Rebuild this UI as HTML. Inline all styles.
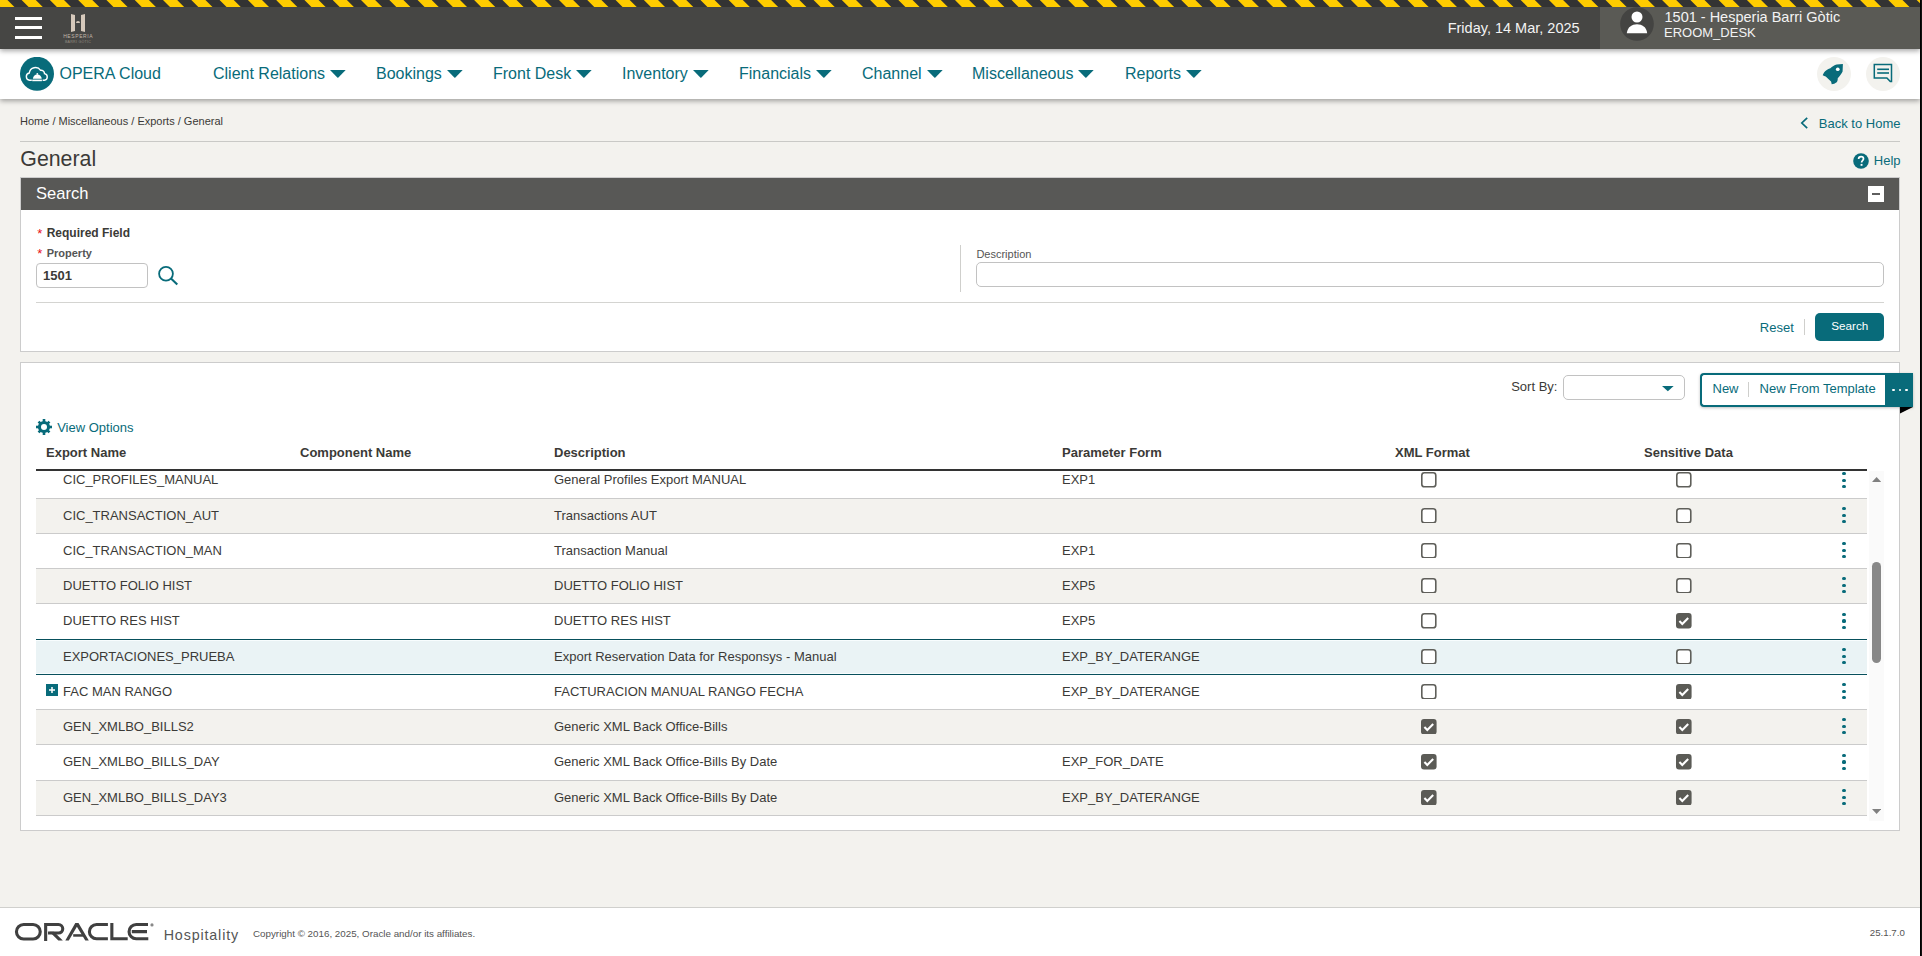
<!DOCTYPE html>
<html><head><meta charset="utf-8"><style>
*{box-sizing:border-box;margin:0;padding:0}
html,body{width:1922px;height:956px;overflow:hidden}
body{position:relative;background:#f3f2ee;font-family:"Liberation Sans",sans-serif;color:#333}
.a{position:absolute;white-space:nowrap;line-height:1}
.teal{color:#086b7a}
.cb{position:absolute;width:15.5px;height:15.5px;border:1.6px solid #5f5f5a;border-radius:3px;background:#fff}
.cbk{position:absolute;width:15.5px;height:15.5px;border-radius:3px;background:#5b5b56}
.hd{position:absolute;font-size:13px;font-weight:bold;color:#333;line-height:1;white-space:nowrap}
.td{position:absolute;font-size:13px;color:#333;line-height:1;white-space:nowrap}
</style></head><body>
<div class="a" style="left:1920px;top:0;width:1px;height:956px;background:#000;z-index:50"></div><div class="a" style="left:1921px;top:0;width:1px;height:956px;background:#131211;z-index:50"></div><div class="a" style="left:0;top:0;width:1920px;height:49px;background:#464644;z-index:10;box-shadow:0 2px 5px rgba(0,0,0,.35)">
<svg class="a" style="left:0;top:0" width="1920" height="7"><rect width="1920" height="7" fill="#333"/><g fill="#fc0"><polygon points="-34.97,0 -20.83,0 -13.83,7 -27.97,7"/><polygon points="-6.68,0 7.46,0 14.46,7 0.32,7"/><polygon points="21.60,0 35.74,0 42.74,7 28.60,7"/><polygon points="49.88,0 64.02,0 71.02,7 56.88,7"/><polygon points="78.17,0 92.31,0 99.31,7 85.17,7"/><polygon points="106.45,0 120.59,0 127.59,7 113.45,7"/><polygon points="134.74,0 148.88,0 155.88,7 141.74,7"/><polygon points="163.02,0 177.16,0 184.16,7 170.02,7"/><polygon points="191.30,0 205.44,0 212.44,7 198.30,7"/><polygon points="219.59,0 233.73,0 240.73,7 226.59,7"/><polygon points="247.87,0 262.01,0 269.01,7 254.87,7"/><polygon points="276.16,0 290.30,0 297.30,7 283.16,7"/><polygon points="304.44,0 318.58,0 325.58,7 311.44,7"/><polygon points="332.72,0 346.86,0 353.86,7 339.72,7"/><polygon points="361.01,0 375.15,0 382.15,7 368.01,7"/><polygon points="389.29,0 403.43,0 410.43,7 396.29,7"/><polygon points="417.58,0 431.72,0 438.72,7 424.58,7"/><polygon points="445.86,0 460.00,0 467.00,7 452.86,7"/><polygon points="474.14,0 488.28,0 495.28,7 481.14,7"/><polygon points="502.43,0 516.57,0 523.57,7 509.43,7"/><polygon points="530.71,0 544.85,0 551.85,7 537.71,7"/><polygon points="559.00,0 573.14,0 580.14,7 566.00,7"/><polygon points="587.28,0 601.42,0 608.42,7 594.28,7"/><polygon points="615.56,0 629.70,0 636.70,7 622.56,7"/><polygon points="643.85,0 657.99,0 664.99,7 650.85,7"/><polygon points="672.13,0 686.27,0 693.27,7 679.13,7"/><polygon points="700.42,0 714.56,0 721.56,7 707.42,7"/><polygon points="728.70,0 742.84,0 749.84,7 735.70,7"/><polygon points="756.98,0 771.12,0 778.12,7 763.98,7"/><polygon points="785.27,0 799.41,0 806.41,7 792.27,7"/><polygon points="813.55,0 827.69,0 834.69,7 820.55,7"/><polygon points="841.84,0 855.98,0 862.98,7 848.84,7"/><polygon points="870.12,0 884.26,0 891.26,7 877.12,7"/><polygon points="898.40,0 912.54,0 919.54,7 905.40,7"/><polygon points="926.69,0 940.83,0 947.83,7 933.69,7"/><polygon points="954.97,0 969.11,0 976.11,7 961.97,7"/><polygon points="983.26,0 997.40,0 1004.40,7 990.26,7"/><polygon points="1011.54,0 1025.68,0 1032.68,7 1018.54,7"/><polygon points="1039.82,0 1053.96,0 1060.96,7 1046.82,7"/><polygon points="1068.11,0 1082.25,0 1089.25,7 1075.11,7"/><polygon points="1096.39,0 1110.53,0 1117.53,7 1103.39,7"/><polygon points="1124.68,0 1138.82,0 1145.82,7 1131.68,7"/><polygon points="1152.96,0 1167.10,0 1174.10,7 1159.96,7"/><polygon points="1181.24,0 1195.38,0 1202.38,7 1188.24,7"/><polygon points="1209.53,0 1223.67,0 1230.67,7 1216.53,7"/><polygon points="1237.81,0 1251.95,0 1258.95,7 1244.81,7"/><polygon points="1266.10,0 1280.24,0 1287.24,7 1273.10,7"/><polygon points="1294.38,0 1308.52,0 1315.52,7 1301.38,7"/><polygon points="1322.66,0 1336.80,0 1343.80,7 1329.66,7"/><polygon points="1350.95,0 1365.09,0 1372.09,7 1357.95,7"/><polygon points="1379.23,0 1393.37,0 1400.37,7 1386.23,7"/><polygon points="1407.52,0 1421.66,0 1428.66,7 1414.52,7"/><polygon points="1435.80,0 1449.94,0 1456.94,7 1442.80,7"/><polygon points="1464.08,0 1478.22,0 1485.22,7 1471.08,7"/><polygon points="1492.37,0 1506.51,0 1513.51,7 1499.37,7"/><polygon points="1520.65,0 1534.79,0 1541.79,7 1527.65,7"/><polygon points="1548.94,0 1563.08,0 1570.08,7 1555.94,7"/><polygon points="1577.22,0 1591.36,0 1598.36,7 1584.22,7"/><polygon points="1605.50,0 1619.64,0 1626.64,7 1612.50,7"/><polygon points="1633.79,0 1647.93,0 1654.93,7 1640.79,7"/><polygon points="1662.07,0 1676.21,0 1683.21,7 1669.07,7"/><polygon points="1690.36,0 1704.50,0 1711.50,7 1697.36,7"/><polygon points="1718.64,0 1732.78,0 1739.78,7 1725.64,7"/><polygon points="1746.92,0 1761.06,0 1768.06,7 1753.92,7"/><polygon points="1775.21,0 1789.35,0 1796.35,7 1782.21,7"/><polygon points="1803.49,0 1817.63,0 1824.63,7 1810.49,7"/><polygon points="1831.78,0 1845.92,0 1852.92,7 1838.78,7"/><polygon points="1860.06,0 1874.20,0 1881.20,7 1867.06,7"/><polygon points="1888.34,0 1902.48,0 1909.48,7 1895.34,7"/><polygon points="1916.63,0 1930.77,0 1937.77,7 1923.63,7"/></g></svg>
<div class="a" style="left:1600px;top:7px;width:320px;height:42px;background:#5a5a55"></div>
<div class="a" style="left:15px;top:17px;width:27px;height:3px;background:#fff"></div>
<div class="a" style="left:15px;top:26px;width:27px;height:3px;background:#fff"></div>
<div class="a" style="left:15px;top:36px;width:27px;height:3px;background:#fff"></div>
<svg class="a" style="left:60px;top:12px" width="36" height="32" viewBox="0 0 36 32">
 <g fill="#d6c9bb"><path d="M11 2 L15 3 L15 19 L11 20 Z"/><path d="M21 3 L25 2 L25 20 L21 19 Z"/><path d="M16 11 a2 2 0 0 1 4 0 Z"/></g>
 <text x="18.2" y="26" font-size="5" text-anchor="middle" fill="#c2b7aa" font-family="Liberation Sans" letter-spacing="0.6">HESPERIA</text>
 <text x="18" y="30.5" font-size="3.6" text-anchor="middle" fill="#968d82" font-family="Liberation Sans" letter-spacing=".25">BARRI GÒTIC</text>
</svg>
<svg class="a" style="left:1620px;top:7.1px" width="34" height="34" viewBox="0 0 34 34">
 <circle cx="17" cy="17" r="16.8" fill="#444442"/><circle cx="17" cy="10" r="5.5" fill="#fff"/>
 <path d="M6.8 26.2 C7.5 20 12 17.3 17 17.3 C22 17.3 26.5 20 27.2 26.2 Z" fill="#fff"/>
</svg>
<div class="a" style="left:1447.7px;top:20.73px;font-size:14.5px;color:#f3f3f3">Friday, 14 Mar, 2025</div>
<div class="a" style="left:1664.5px;top:9.73px;font-size:14.5px;color:#f3f3f3">1501 - Hesperia Barri Gòtic</div>
<div class="a" style="left:1664px;top:26.00px;font-size:13px;color:#f3f3f3">EROOM_DESK</div>
</div><div class="a" style="left:0;top:49px;width:1920px;height:50px;background:#fff;z-index:9;box-shadow:0 2px 5px rgba(0,0,0,.35)">
<svg class="a" style="left:20px;top:8px" width="34" height="34" viewBox="0 0 34 34">
 <circle cx="17" cy="16.8" r="17" fill="#086b7a"/>
 <g transform="translate(0 -1)"><path d="M11.8 24.3 H9.6 A3.7 3.7 0 0 1 9.3 17 A6.2 6.2 0 0 1 20.6 14.3 A3.4 3.4 0 0 1 24.5 17.6 A3.4 3.4 0 0 1 24.4 24.3 H22.6" fill="none" stroke="#fff" stroke-width="1.4"/>
 <path d="M12.9 22.85 A4.4 4.4 0 0 1 21.7 22.85 Z" fill="#fff"/>
 <circle cx="17.3" cy="17.9" r=".9" fill="#fff"/>
 <rect x="12.2" y="23.6" width="9.7" height="1.6" fill="#fff"/></g>
</svg>
<svg class="a" style="left:1817px;top:7.8px" width="34" height="34" viewBox="0 0 34 34">
 <circle cx="17" cy="17" r="17" fill="#f3f2ee"/>
 <path d="M25.9 6.9 L25.6 14.6 C24.5 17 22.5 19.5 20.75 21.3 C20.8 23 20.5 24.5 19.7 25.3 C18 26.5 16.5 27.2 14.7 27.3 C14.5 26.3 14.3 25.5 14.05 24.6 L8.7 19.6 C7.8 19.4 6.8 18.9 5.7 18.3 C6.3 16.5 7.5 14.5 9.4 13.25 C10.7 12.3 12 11.7 13.4 11.2 C15.2 9.5 17.5 8 19.7 7.4 Z" fill="#086b7a"/>
 <circle cx="20.75" cy="12.25" r="1.85" fill="#fff"/>
</svg>
<svg class="a" style="left:1866px;top:7.8px" width="34" height="34" viewBox="0 0 34 34">
 <circle cx="17" cy="17" r="17" fill="#f3f2ee"/>
 <path d="M8.3 7.6 H25.5 V24.6 H24.3 L20.9 20.9 H8.3 Z" fill="none" stroke="#086b7a" stroke-width="1.5" stroke-linejoin="miter"/>
 <rect x="11.2" y="11.5" width="11.8" height="1.6" fill="#086b7a"/>
 <rect x="11.2" y="15.2" width="11.8" height="1.6" fill="#086b7a"/>
</svg>
<div class="a" style="left:59.5px;top:16.56px;font-size:16px;color:#086b7a">OPERA Cloud</div>
<div class="a" style="left:213px;top:16.56px;font-size:16px;color:#086b7a">Client Relations</div>
<svg class="a" style="left:330.1px;top:21px" width="16" height="8" viewBox="0 0 16 8"><path d="M0 0 H15.7 L8.4 7.6 Q7.85 8.1 7.3 7.6 Z" fill="#086b7a"/></svg><div class="a" style="left:376px;top:16.56px;font-size:16px;color:#086b7a">Bookings</div>
<svg class="a" style="left:446.8px;top:21px" width="16" height="8" viewBox="0 0 16 8"><path d="M0 0 H15.7 L8.4 7.6 Q7.85 8.1 7.3 7.6 Z" fill="#086b7a"/></svg><div class="a" style="left:493px;top:16.56px;font-size:16px;color:#086b7a">Front Desk</div>
<svg class="a" style="left:576.2px;top:21px" width="16" height="8" viewBox="0 0 16 8"><path d="M0 0 H15.7 L8.4 7.6 Q7.85 8.1 7.3 7.6 Z" fill="#086b7a"/></svg><div class="a" style="left:622px;top:16.56px;font-size:16px;color:#086b7a">Inventory</div>
<svg class="a" style="left:692.8px;top:21px" width="16" height="8" viewBox="0 0 16 8"><path d="M0 0 H15.7 L8.4 7.6 Q7.85 8.1 7.3 7.6 Z" fill="#086b7a"/></svg><div class="a" style="left:739px;top:16.56px;font-size:16px;color:#086b7a">Financials</div>
<svg class="a" style="left:816.0px;top:21px" width="16" height="8" viewBox="0 0 16 8"><path d="M0 0 H15.7 L8.4 7.6 Q7.85 8.1 7.3 7.6 Z" fill="#086b7a"/></svg><div class="a" style="left:862px;top:16.56px;font-size:16px;color:#086b7a">Channel</div>
<svg class="a" style="left:926.6px;top:21px" width="16" height="8" viewBox="0 0 16 8"><path d="M0 0 H15.7 L8.4 7.6 Q7.85 8.1 7.3 7.6 Z" fill="#086b7a"/></svg><div class="a" style="left:972px;top:16.56px;font-size:16px;color:#086b7a">Miscellaneous</div>
<svg class="a" style="left:1078.4px;top:21px" width="16" height="8" viewBox="0 0 16 8"><path d="M0 0 H15.7 L8.4 7.6 Q7.85 8.1 7.3 7.6 Z" fill="#086b7a"/></svg><div class="a" style="left:1125px;top:16.56px;font-size:16px;color:#086b7a">Reports</div>
<svg class="a" style="left:1186.0px;top:21px" width="16" height="8" viewBox="0 0 16 8"><path d="M0 0 H15.7 L8.4 7.6 Q7.85 8.1 7.3 7.6 Z" fill="#086b7a"/></svg></div><div class="a" style="left:20px;top:115.69px;font-size:11px;color:#3b3a37">Home / Miscellaneous / Exports / General</div>
<div class="a" style="left:20px;top:141px;width:1880px;height:1px;background:#c9c9c6"></div><div class="a" style="left:20.3px;top:149.44px;font-size:21.33px;color:#3b3a37">General</div>
<svg class="a" style="left:1800px;top:117px" width="9" height="12" viewBox="0 0 9 12"><path d="M7.2 0.8 L1.8 6 L7.2 11.2" fill="none" stroke="#086b7a" stroke-width="1.7"/></svg><div class="a" style="left:1818.8px;top:116.90px;font-size:13px;color:#086b7a">Back to Home</div>
<svg class="a" style="left:1853px;top:152.6px" width="16" height="16" viewBox="0 0 16 16"><circle cx="8" cy="8" r="7.8" fill="#086b7a"/><path d="M5.6 6.1 C5.6 4.6 6.7 3.7 8.1 3.7 C9.6 3.7 10.5 4.6 10.5 5.8 C10.5 7.4 8.6 7.6 8.6 9.4" fill="none" stroke="#fff" stroke-width="1.7"/><rect x="7.6" y="10.9" width="1.9" height="1.9" fill="#fff"/></svg><div class="a" style="left:1873.8px;top:153.80px;font-size:13px;color:#086b7a">Help</div>
<div class="a" style="left:20px;top:177px;width:1880px;height:175px;background:#fff;border:1px solid #cccccc"></div><div class="a" style="left:21px;top:178px;width:1878px;height:32px;background:#585856"></div><div class="a" style="left:36px;top:185.59px;font-size:16.55px;color:#fff">Search</div>
<div class="a" style="left:1868px;top:186px;width:16px;height:16px;background:#fff"></div><div class="a" style="left:1872px;top:193px;width:8px;height:2px;background:#5e5e5e"></div><div class="a" style="left:37.2px;top:226.70px;font-size:13px;color:#e8101a">*</div>
<div class="a" style="left:46.7px;top:227.04px;font-size:12px;color:#3b3a37;font-weight:bold">Required Field</div>
<div class="a" style="left:37.2px;top:247.30px;font-size:13px;color:#e8101a">*</div>
<div class="a" style="left:46.7px;top:248.49px;font-size:11px;color:#555;font-weight:bold">Property</div>
<div class="a" style="left:36px;top:263px;width:112px;height:25px;border:1px solid #c2c2c2;border-radius:4px;background:#fff"></div><div class="a" style="left:43px;top:268.80px;font-size:13px;color:#3b3a37;font-weight:bold">1501</div>
<svg class="a" style="left:156px;top:264px" width="24" height="24" viewBox="0 0 24 24"><circle cx="10" cy="9.7" r="6.9" fill="none" stroke="#086b7a" stroke-width="1.8"/><path d="M15 14.6 L21.3 20.5" stroke="#086b7a" stroke-width="2.1"/></svg><div class="a" style="left:960px;top:245px;width:1px;height:47px;background:#cfcfcc"></div><div class="a" style="left:976.4px;top:248.59px;font-size:11px;color:#555">Description</div>
<div class="a" style="left:976px;top:262px;width:908px;height:25px;border:1px solid #c2c2c2;border-radius:5px;background:#fff"></div><div class="a" style="left:36px;top:302px;width:1848px;height:1px;background:#d4d4d1"></div><div class="a" style="left:1759.8px;top:321.00px;font-size:13px;color:#086b7a">Reset</div>
<div class="a" style="left:1804px;top:319px;width:1px;height:16px;background:#cfcfcc"></div><div class="a" style="left:1815px;top:313px;width:69px;height:28px;background:#086b7a;border-radius:5px"></div><div class="a" style="left:1831.2px;top:320.20px;font-size:11.7px;color:#fff">Search</div>
<div class="a" style="left:20px;top:362px;width:1880px;height:469px;background:#fff;border:1px solid #cccccc"></div><div class="a" style="left:1511.2px;top:379.80px;font-size:13px;color:#3b3a37">Sort By:</div>
<div class="a" style="left:1563px;top:375px;width:122px;height:25px;border:1px solid #c2c2c2;border-radius:5px;background:#fff"></div><svg class="a" style="left:1662px;top:385.8px" width="12" height="6" viewBox="0 0 12 6"><path d="M0 0 H11.7 L5.85 5.3 Z" fill="#086b7a"/></svg><div class="a" style="left:1700px;top:373px;width:213px;height:34px;border:2px solid #086b7a;border-right:0;border-radius:4px 0 0 4px;background:#fff;box-shadow:0 1px 3px rgba(0,0,0,.25)"></div><div class="a" style="left:1712.5px;top:381.70px;font-size:13px;color:#086b7a">New</div>
<div class="a" style="left:1748px;top:382px;width:1px;height:15px;background:#cfcfcc"></div><div class="a" style="left:1759.6px;top:381.70px;font-size:13px;color:#086b7a">New From Template</div>
<div class="a" style="left:1885px;top:373px;width:28px;height:34px;background:#086b7a"></div><div class="a" style="left:1892.0px;top:388.6px;width:2.8px;height:2.8px;border-radius:50%;background:#fff"></div><div class="a" style="left:1898.5px;top:388.6px;width:2.8px;height:2.8px;border-radius:50%;background:#fff"></div><div class="a" style="left:1905.0px;top:388.6px;width:2.8px;height:2.8px;border-radius:50%;background:#fff"></div><svg class="a" style="left:1900px;top:407px" width="13" height="7" viewBox="0 0 13 7"><path d="M0 0 H13 L0 6.5 Z" fill="#000"/></svg><svg class="a" style="left:36px;top:419px" width="16" height="16" viewBox="0 0 16 16"><g fill="#086b7a">
<circle cx="8" cy="8" r="6.1"/>
<rect x="6.7" y="0" width="2.6" height="16"/><rect x="0" y="6.7" width="16" height="2.6"/>
<rect x="6.7" y="0.3" width="2.6" height="15.4" transform="rotate(45 8 8)"/><rect x="6.7" y="0.3" width="2.6" height="15.4" transform="rotate(-45 8 8)"/>
</g><circle cx="8" cy="8" r="3" fill="#fff"/></svg><div class="a" style="left:57.2px;top:420.80px;font-size:13px;color:#086b7a">View Options</div>
<div class="a" style="left:46px;top:446.00px;font-size:13px;color:#3b3a37;font-weight:bold">Export Name</div>
<div class="a" style="left:300px;top:446.00px;font-size:13px;color:#3b3a37;font-weight:bold">Component Name</div>
<div class="a" style="left:554px;top:446.00px;font-size:13px;color:#3b3a37;font-weight:bold">Description</div>
<div class="a" style="left:1062px;top:446.00px;font-size:13px;color:#3b3a37;font-weight:bold">Parameter Form</div>
<div class="a" style="left:1395px;top:446.00px;font-size:13px;color:#3b3a37;font-weight:bold">XML Format</div>
<div class="a" style="left:1644px;top:446.00px;font-size:13px;color:#3b3a37;font-weight:bold">Sensitive Data</div>
<div class="a" style="left:36px;top:471px;width:1831px;height:345px;overflow:hidden"><div class="a" style="left:0;top:-7px;width:1831px;height:34px;background:#fff"></div><div class="a" style="left:0;top:27px;width:1831px;height:1px;background:#cbcbcb"></div><div class="a" style="left:27px;top:2.00px;font-size:13px;color:#3b3a37">CIC_PROFILES_MANUAL</div>
<div class="a" style="left:518px;top:2.00px;font-size:13px;color:#3b3a37">General Profiles Export MANUAL</div>
<div class="a" style="left:1026px;top:2.00px;font-size:13px;color:#3b3a37">EXP1</div>
<svg class="a" style="left:1385.2px;top:1.4px" width="15.6" height="15.6" viewBox="0 0 15.6 15.6"><rect x=".8" y=".8" width="14" height="14" rx="2.6" fill="#fff" stroke="#5f5f5a" stroke-width="1.6"/></svg><svg class="a" style="left:1640.2px;top:1.4px" width="15.6" height="15.6" viewBox="0 0 15.6 15.6"><rect x=".8" y=".8" width="14" height="14" rx="2.6" fill="#fff" stroke="#5f5f5a" stroke-width="1.6"/></svg><div class="a" style="left:1806.4px;top:1.0px;width:3.2px;height:3.2px;border-radius:50%;background:#086b7a"></div><div class="a" style="left:1806.4px;top:7.6px;width:3.2px;height:3.2px;border-radius:50%;background:#086b7a"></div><div class="a" style="left:1806.4px;top:14.0px;width:3.2px;height:3.2px;border-radius:50%;background:#086b7a"></div><div class="a" style="left:0;top:28px;width:1831px;height:34px;background:#f3f2ee"></div><div class="a" style="left:0;top:62px;width:1831px;height:1px;background:#cbcbcb"></div><div class="a" style="left:27px;top:38.00px;font-size:13px;color:#3b3a37">CIC_TRANSACTION_AUT</div>
<div class="a" style="left:518px;top:38.00px;font-size:13px;color:#3b3a37">Transactions AUT</div>
<svg class="a" style="left:1385.2px;top:36.7px" width="15.6" height="15.6" viewBox="0 0 15.6 15.6"><rect x=".8" y=".8" width="14" height="14" rx="2.6" fill="#fff" stroke="#5f5f5a" stroke-width="1.6"/></svg><svg class="a" style="left:1640.2px;top:36.7px" width="15.6" height="15.6" viewBox="0 0 15.6 15.6"><rect x=".8" y=".8" width="14" height="14" rx="2.6" fill="#fff" stroke="#5f5f5a" stroke-width="1.6"/></svg><div class="a" style="left:1806.4px;top:36.3px;width:3.2px;height:3.2px;border-radius:50%;background:#086b7a"></div><div class="a" style="left:1806.4px;top:42.9px;width:3.2px;height:3.2px;border-radius:50%;background:#086b7a"></div><div class="a" style="left:1806.4px;top:49.3px;width:3.2px;height:3.2px;border-radius:50%;background:#086b7a"></div><div class="a" style="left:0;top:63px;width:1831px;height:34px;background:#fff"></div><div class="a" style="left:0;top:97px;width:1831px;height:1px;background:#cbcbcb"></div><div class="a" style="left:27px;top:73.00px;font-size:13px;color:#3b3a37">CIC_TRANSACTION_MAN</div>
<div class="a" style="left:518px;top:73.00px;font-size:13px;color:#3b3a37">Transaction Manual</div>
<div class="a" style="left:1026px;top:73.00px;font-size:13px;color:#3b3a37">EXP1</div>
<svg class="a" style="left:1385.2px;top:71.7px" width="15.6" height="15.6" viewBox="0 0 15.6 15.6"><rect x=".8" y=".8" width="14" height="14" rx="2.6" fill="#fff" stroke="#5f5f5a" stroke-width="1.6"/></svg><svg class="a" style="left:1640.2px;top:71.7px" width="15.6" height="15.6" viewBox="0 0 15.6 15.6"><rect x=".8" y=".8" width="14" height="14" rx="2.6" fill="#fff" stroke="#5f5f5a" stroke-width="1.6"/></svg><div class="a" style="left:1806.4px;top:71.3px;width:3.2px;height:3.2px;border-radius:50%;background:#086b7a"></div><div class="a" style="left:1806.4px;top:77.9px;width:3.2px;height:3.2px;border-radius:50%;background:#086b7a"></div><div class="a" style="left:1806.4px;top:84.3px;width:3.2px;height:3.2px;border-radius:50%;background:#086b7a"></div><div class="a" style="left:0;top:98px;width:1831px;height:34px;background:#f3f2ee"></div><div class="a" style="left:0;top:132px;width:1831px;height:1px;background:#cbcbcb"></div><div class="a" style="left:27px;top:108.00px;font-size:13px;color:#3b3a37">DUETTO FOLIO HIST</div>
<div class="a" style="left:518px;top:108.00px;font-size:13px;color:#3b3a37">DUETTO FOLIO HIST</div>
<div class="a" style="left:1026px;top:108.00px;font-size:13px;color:#3b3a37">EXP5</div>
<svg class="a" style="left:1385.2px;top:106.7px" width="15.6" height="15.6" viewBox="0 0 15.6 15.6"><rect x=".8" y=".8" width="14" height="14" rx="2.6" fill="#fff" stroke="#5f5f5a" stroke-width="1.6"/></svg><svg class="a" style="left:1640.2px;top:106.7px" width="15.6" height="15.6" viewBox="0 0 15.6 15.6"><rect x=".8" y=".8" width="14" height="14" rx="2.6" fill="#fff" stroke="#5f5f5a" stroke-width="1.6"/></svg><div class="a" style="left:1806.4px;top:106.3px;width:3.2px;height:3.2px;border-radius:50%;background:#086b7a"></div><div class="a" style="left:1806.4px;top:112.9px;width:3.2px;height:3.2px;border-radius:50%;background:#086b7a"></div><div class="a" style="left:1806.4px;top:119.3px;width:3.2px;height:3.2px;border-radius:50%;background:#086b7a"></div><div class="a" style="left:0;top:133px;width:1831px;height:35px;background:#fff"></div><div class="a" style="left:27px;top:143.00px;font-size:13px;color:#3b3a37">DUETTO RES HIST</div>
<div class="a" style="left:518px;top:143.00px;font-size:13px;color:#3b3a37">DUETTO RES HIST</div>
<div class="a" style="left:1026px;top:143.00px;font-size:13px;color:#3b3a37">EXP5</div>
<svg class="a" style="left:1385.2px;top:142.2px" width="15.6" height="15.6" viewBox="0 0 15.6 15.6"><rect x=".8" y=".8" width="14" height="14" rx="2.6" fill="#fff" stroke="#5f5f5a" stroke-width="1.6"/></svg><svg class="a" style="left:1640.2px;top:142.2px" width="15.6" height="15.6" viewBox="0 0 15.6 15.6"><rect width="15.6" height="15.6" rx="3" fill="#5b5b56"/><path d="M3.4 8 L6.3 10.9 L12.2 5" fill="none" stroke="#fff" stroke-width="2.1"/></svg><div class="a" style="left:1806.4px;top:141.8px;width:3.2px;height:3.2px;border-radius:50%;background:#086b7a"></div><div class="a" style="left:1806.4px;top:148.4px;width:3.2px;height:3.2px;border-radius:50%;background:#086b7a"></div><div class="a" style="left:1806.4px;top:154.8px;width:3.2px;height:3.2px;border-radius:50%;background:#086b7a"></div><div class="a" style="left:0;top:169px;width:1831px;height:34px;background:#eaf3f5"></div><div class="a" style="left:0;top:168px;width:1831px;height:1px;background:#08505c"></div><div class="a" style="left:0;top:169px;width:1831px;height:1px;background:#f8fdfe"></div><div class="a" style="left:0;top:202px;width:1831px;height:1px;background:#f8fdfe"></div><div class="a" style="left:0;top:203px;width:1831px;height:1px;background:#08505c"></div><div class="a" style="left:27px;top:179.00px;font-size:13px;color:#3b3a37">EXPORTACIONES_PRUEBA</div>
<div class="a" style="left:518px;top:179.00px;font-size:13px;color:#3b3a37">Export Reservation Data for Responsys - Manual</div>
<div class="a" style="left:1026px;top:179.00px;font-size:13px;color:#3b3a37">EXP_BY_DATERANGE</div>
<svg class="a" style="left:1385.2px;top:177.7px" width="15.6" height="15.6" viewBox="0 0 15.6 15.6"><rect x=".8" y=".8" width="14" height="14" rx="2.6" fill="#fff" stroke="#5f5f5a" stroke-width="1.6"/></svg><svg class="a" style="left:1640.2px;top:177.7px" width="15.6" height="15.6" viewBox="0 0 15.6 15.6"><rect x=".8" y=".8" width="14" height="14" rx="2.6" fill="#fff" stroke="#5f5f5a" stroke-width="1.6"/></svg><div class="a" style="left:1806.4px;top:177.3px;width:3.2px;height:3.2px;border-radius:50%;background:#086b7a"></div><div class="a" style="left:1806.4px;top:183.9px;width:3.2px;height:3.2px;border-radius:50%;background:#086b7a"></div><div class="a" style="left:1806.4px;top:190.3px;width:3.2px;height:3.2px;border-radius:50%;background:#086b7a"></div><div class="a" style="left:0;top:204px;width:1831px;height:34px;background:#fff"></div><div class="a" style="left:0;top:238px;width:1831px;height:1px;background:#cbcbcb"></div><div class="a" style="left:27px;top:214.00px;font-size:13px;color:#3b3a37">FAC MAN RANGO</div>
<div class="a" style="left:518px;top:214.00px;font-size:13px;color:#3b3a37">FACTURACION MANUAL RANGO FECHA</div>
<div class="a" style="left:1026px;top:214.00px;font-size:13px;color:#3b3a37">EXP_BY_DATERANGE</div>
<svg class="a" style="left:1385.2px;top:212.7px" width="15.6" height="15.6" viewBox="0 0 15.6 15.6"><rect x=".8" y=".8" width="14" height="14" rx="2.6" fill="#fff" stroke="#5f5f5a" stroke-width="1.6"/></svg><svg class="a" style="left:1640.2px;top:212.7px" width="15.6" height="15.6" viewBox="0 0 15.6 15.6"><rect width="15.6" height="15.6" rx="3" fill="#5b5b56"/><path d="M3.4 8 L6.3 10.9 L12.2 5" fill="none" stroke="#fff" stroke-width="2.1"/></svg><div class="a" style="left:1806.4px;top:212.3px;width:3.2px;height:3.2px;border-radius:50%;background:#086b7a"></div><div class="a" style="left:1806.4px;top:218.9px;width:3.2px;height:3.2px;border-radius:50%;background:#086b7a"></div><div class="a" style="left:1806.4px;top:225.3px;width:3.2px;height:3.2px;border-radius:50%;background:#086b7a"></div><svg class="a" style="left:10px;top:213px" width="12" height="12" viewBox="0 0 12 12"><rect width="12" height="12" fill="#086b7a"/><path d="M6 3 V9 M3 6 H9" stroke="#fff" stroke-width="1.5"/></svg><div class="a" style="left:0;top:239px;width:1831px;height:34px;background:#f3f2ee"></div><div class="a" style="left:0;top:273px;width:1831px;height:1px;background:#cbcbcb"></div><div class="a" style="left:27px;top:249.00px;font-size:13px;color:#3b3a37">GEN_XMLBO_BILLS2</div>
<div class="a" style="left:518px;top:249.00px;font-size:13px;color:#3b3a37">Generic XML Back Office-Bills</div>
<svg class="a" style="left:1385.2px;top:247.7px" width="15.6" height="15.6" viewBox="0 0 15.6 15.6"><rect width="15.6" height="15.6" rx="3" fill="#5b5b56"/><path d="M3.4 8 L6.3 10.9 L12.2 5" fill="none" stroke="#fff" stroke-width="2.1"/></svg><svg class="a" style="left:1640.2px;top:247.7px" width="15.6" height="15.6" viewBox="0 0 15.6 15.6"><rect width="15.6" height="15.6" rx="3" fill="#5b5b56"/><path d="M3.4 8 L6.3 10.9 L12.2 5" fill="none" stroke="#fff" stroke-width="2.1"/></svg><div class="a" style="left:1806.4px;top:247.3px;width:3.2px;height:3.2px;border-radius:50%;background:#086b7a"></div><div class="a" style="left:1806.4px;top:253.9px;width:3.2px;height:3.2px;border-radius:50%;background:#086b7a"></div><div class="a" style="left:1806.4px;top:260.3px;width:3.2px;height:3.2px;border-radius:50%;background:#086b7a"></div><div class="a" style="left:0;top:274px;width:1831px;height:35px;background:#fff"></div><div class="a" style="left:0;top:309px;width:1831px;height:1px;background:#cbcbcb"></div><div class="a" style="left:27px;top:284.00px;font-size:13px;color:#3b3a37">GEN_XMLBO_BILLS_DAY</div>
<div class="a" style="left:518px;top:284.00px;font-size:13px;color:#3b3a37">Generic XML Back Office-Bills By Date</div>
<div class="a" style="left:1026px;top:284.00px;font-size:13px;color:#3b3a37">EXP_FOR_DATE</div>
<svg class="a" style="left:1385.2px;top:283.2px" width="15.6" height="15.6" viewBox="0 0 15.6 15.6"><rect width="15.6" height="15.6" rx="3" fill="#5b5b56"/><path d="M3.4 8 L6.3 10.9 L12.2 5" fill="none" stroke="#fff" stroke-width="2.1"/></svg><svg class="a" style="left:1640.2px;top:283.2px" width="15.6" height="15.6" viewBox="0 0 15.6 15.6"><rect width="15.6" height="15.6" rx="3" fill="#5b5b56"/><path d="M3.4 8 L6.3 10.9 L12.2 5" fill="none" stroke="#fff" stroke-width="2.1"/></svg><div class="a" style="left:1806.4px;top:282.8px;width:3.2px;height:3.2px;border-radius:50%;background:#086b7a"></div><div class="a" style="left:1806.4px;top:289.4px;width:3.2px;height:3.2px;border-radius:50%;background:#086b7a"></div><div class="a" style="left:1806.4px;top:295.8px;width:3.2px;height:3.2px;border-radius:50%;background:#086b7a"></div><div class="a" style="left:0;top:310px;width:1831px;height:34px;background:#f3f2ee"></div><div class="a" style="left:0;top:344px;width:1831px;height:1px;background:#cbcbcb"></div><div class="a" style="left:27px;top:320.00px;font-size:13px;color:#3b3a37">GEN_XMLBO_BILLS_DAY3</div>
<div class="a" style="left:518px;top:320.00px;font-size:13px;color:#3b3a37">Generic XML Back Office-Bills By Date</div>
<div class="a" style="left:1026px;top:320.00px;font-size:13px;color:#3b3a37">EXP_BY_DATERANGE</div>
<svg class="a" style="left:1385.2px;top:318.7px" width="15.6" height="15.6" viewBox="0 0 15.6 15.6"><rect width="15.6" height="15.6" rx="3" fill="#5b5b56"/><path d="M3.4 8 L6.3 10.9 L12.2 5" fill="none" stroke="#fff" stroke-width="2.1"/></svg><svg class="a" style="left:1640.2px;top:318.7px" width="15.6" height="15.6" viewBox="0 0 15.6 15.6"><rect width="15.6" height="15.6" rx="3" fill="#5b5b56"/><path d="M3.4 8 L6.3 10.9 L12.2 5" fill="none" stroke="#fff" stroke-width="2.1"/></svg><div class="a" style="left:1806.4px;top:318.3px;width:3.2px;height:3.2px;border-radius:50%;background:#086b7a"></div><div class="a" style="left:1806.4px;top:324.9px;width:3.2px;height:3.2px;border-radius:50%;background:#086b7a"></div><div class="a" style="left:1806.4px;top:331.3px;width:3.2px;height:3.2px;border-radius:50%;background:#086b7a"></div></div><div class="a" style="left:36px;top:469px;width:1831px;height:2px;background:#333"></div><div class="a" style="left:1869px;top:471px;width:15px;height:350px;background:#fafafa"></div><svg class="a" style="left:1871.9px;top:476.9px" width="9.2" height="5" viewBox="0 0 9.2 5"><path d="M0 5 H9.2 L4.6 0 Z" fill="#808080"/></svg><svg class="a" style="left:1871.9px;top:809px" width="9.2" height="5" viewBox="0 0 9.2 5"><path d="M0 0 H9.2 L4.6 5 Z" fill="#808080"/></svg><div class="a" style="left:1872px;top:562px;width:9px;height:101px;border-radius:4.5px;background:#888"></div><div class="a" style="left:0;top:907px;width:1920px;height:49px;background:#fff;border-top:1px solid #d0d0cd"></div><svg class="a" style="left:0;top:918px" width="160" height="28" viewBox="0 0 160 28"><g fill="none" stroke="#404040" stroke-width="3.1">
<rect x="16.45" y="6.55" width="23.8" height="14.4" rx="7.2"/>
<path d="M45.65 23 V6.55 H58.5 A4.25 4.25 0 0 1 58.5 15.05 H48"/>
<path d="M96.55 6.5 H107.9 M107.9 20.8 H96.55 A7.15 7.15 0 0 1 96.55 6.5"/>
<path d="M111.85 5 V20.75 H127.7"/>
<path d="M148 6.5 H136.2 A7.15 7.15 0 0 0 136.2 20.8 H148.3 M131.8 13.6 H147"/>
</g><g fill="#404040">
<path d="M49.5 13.7 H54 L62.8 22.5 H58.3 Z"/>
<path d="M65.3 22.5 L75.3 5 H78.5 L88.8 22.5 H85.3 L76.9 8.7 L68.8 22.5 Z"/>
<rect x="73.2" y="16.2" width="9.8" height="2.5"/>
</g><circle cx="152" cy="6.9" r="1.6" fill="#888"/></svg><div class="a" style="left:163.7px;top:927.90px;font-size:14.3px;color:#555555;letter-spacing:0.85px">Hospitality</div>
<div class="a" style="left:253px;top:928.70px;font-size:9.8px;color:#555">Copyright © 2016, 2025, Oracle and/or its affiliates.</div>
<div class="a" style="left:1869.8px;top:927.79px;font-size:9.7px;color:#555">25.1.7.0</div>
</body></html>
